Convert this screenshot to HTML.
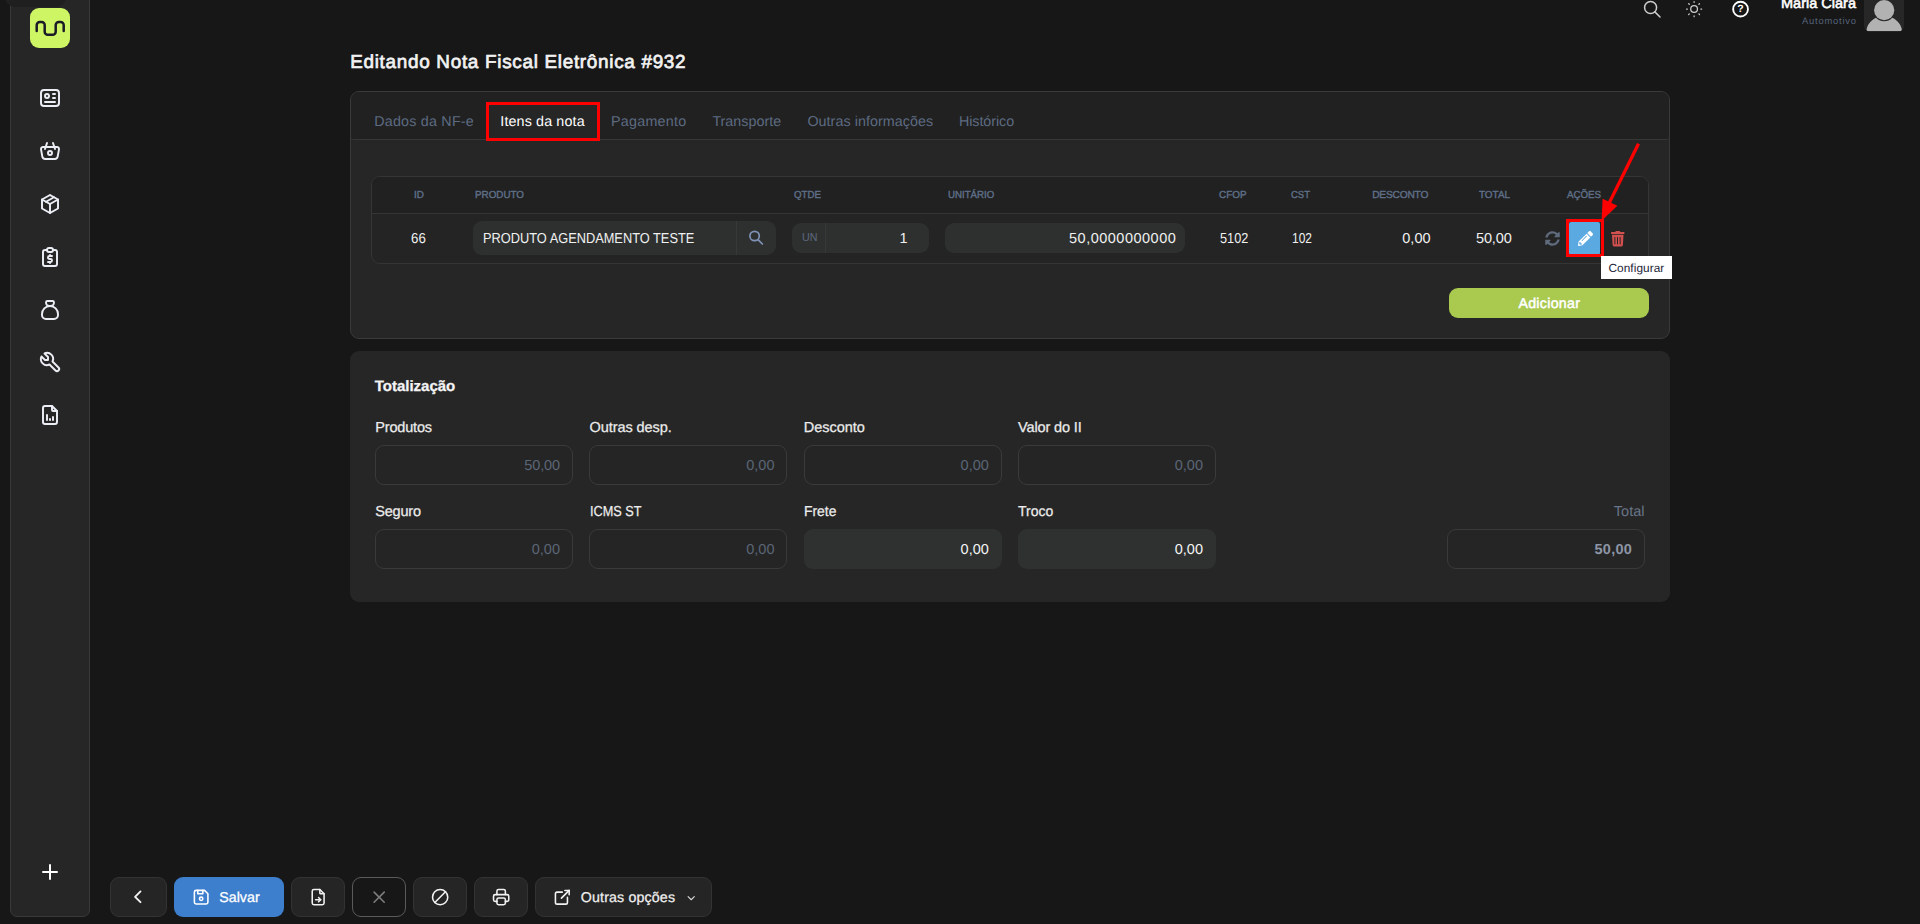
<!DOCTYPE html>
<html lang="pt-BR"><head><meta charset="utf-8"><title>Editando Nota Fiscal Eletrônica #932</title>
<style>
*{margin:0;padding:0;box-sizing:border-box}
html,body{width:1920px;height:924px;overflow:hidden;background:#171717;font-family:"Liberation Sans",sans-serif}
body{position:relative}
.a{position:absolute}
.t{position:absolute;white-space:pre;font-family:"Liberation Sans",sans-serif;text-rendering:geometricPrecision}
svg{position:absolute;overflow:visible}
.strip{left:0;top:0;width:10px;height:924px;background:#171717}
.side{left:10px;top:-10px;width:80px;height:927px;background:#262626;border:1px solid #393939;border-radius:0 0 7px 7px}
.notch{left:5px;top:-20px;width:61px;height:27px;background:#1f1f1f;border-radius:10px}
.logo{left:30px;top:8px;width:40px;height:40px;background:#cdf564;border-radius:9px}
.card{background:#262626;border:1px solid #3a3a3a;border-radius:9px}
.c1{left:350px;top:91px;width:1320px;height:248px}
.tabs{left:351px;top:92px;width:1318px;height:48px;background:#212121;border-bottom:1px solid #373737;border-radius:8px 8px 3px 3px}
.tabact{left:488px;top:105px;width:109px;height:35px;background:#262626}
.redbox{left:485.5px;top:102.3px;width:114px;height:39px;border:3.3px solid #fe0000}
.tbl{left:371px;top:176px;width:1278px;height:88px;background:#242424;border:1px solid #353535;border-radius:9px;overflow:hidden}
.tblh{left:0;top:0;width:1278px;height:37px;background:#212121;border-bottom:1px solid #353535}
.inp{background:#2e3030;border-radius:9px}
.i-prod{left:473px;top:221px;width:303px;height:34px}
.i-qty{left:792px;top:223px;width:137px;height:30px}
.i-unit{left:945px;top:223px;width:240px;height:30px}
.div{width:1px;background:#373939}
.blue{left:1568.8px;top:222.4px;width:31.7px;height:32.2px;background:#5ba9e1;border-radius:2px}
.red2{left:1565.5px;top:219.2px;width:38.1px;height:38.2px;border:3.3px solid #fe0000}
.tip{left:1601px;top:256px;width:71.2px;height:22.8px;background:#ffffff}
.add{left:1449px;top:288px;width:200px;height:30px;background:#a9c94f;border-radius:9px}
.c2{left:350px;top:351px;width:1320px;height:251px;border:0;border-radius:9px;background:#262626}
.f{width:198px;height:40px;border-radius:9px;border:1px solid #3a3a3a;background:#252525}
.f.fill{border:0;background:#2f3131}
.btn{top:877px;height:40px;border-radius:9px;background:#252525;border:1px solid #333333}
.btn.pri{background:#3d7ecd;border:0}
.btn.out{background:#171717;border:1px solid #5a5a5a}
.av{left:1864px;top:-6px;width:40px;height:37.5px;background:#272727;border-radius:6px;overflow:hidden}

</style></head>
<body>
<div class="a strip"></div>
<div class="a side"></div>
<div class="a notch"></div>
<div class="a logo"></div>
<svg style="left:30px;top:8px" width="40" height="40" viewBox="30 8 40 40" fill="none" stroke="#1b1b27" stroke-width="2.5" stroke-linecap="round" stroke-linejoin="round">
 <path d="M36.7 31V25.1a3.1 3.1 0 0 1 3.1 -3.1h1.800a3.100 3.100 0 0 1 3.100 3.100V31.700a3.100 3.100 0 0 0 3.100 3.100h4.800a3.100 3.100 0 0 0 3.100 -3.100V25.100a3.100 3.100 0 0 1 3.100 -3.100h1.800a3.100 3.100 0 0 1 3.100 3.100V31"/>
</svg>
<svg style="left:38.00px;top:86.00px" width="24" height="24" viewBox="0 0 24 24" fill="none" stroke="#eceef5" stroke-width="1.95" stroke-linecap="round" stroke-linejoin="round" ><path d="M3 7a3 3 0 0 1 3 -3h12a3 3 0 0 1 3 3v10a3 3 0 0 1 -3 3h-12a3 3 0 0 1 -3 -3z"/><path d="M7 10a2 2 0 1 0 4 0a2 2 0 1 0 -4 0"/><path d="M15 8h2"/><path d="M15 12h2"/><path d="M7 16h10"/></svg>
<svg style="left:38.00px;top:139.00px" width="24" height="24" viewBox="0 0 24 24" fill="none" stroke="#eceef5" stroke-width="1.95" stroke-linecap="round" stroke-linejoin="round" ><path d="M10 14a2 2 0 1 0 4 0a2 2 0 0 0 -4 0"/><path d="M5.001 8h13.999a2 2 0 0 1 1.977 2.304l-1.255 7.152a3 3 0 0 1 -2.966 2.544h-9.512a3 3 0 0 1 -2.965 -2.544l-1.255 -7.152a2 2 0 0 1 1.977 -2.304z"/><path d="M17 10l-2 -6"/><path d="M7 10l2 -6"/></svg>
<svg style="left:38.00px;top:192.00px" width="24" height="24" viewBox="0 0 24 24" fill="none" stroke="#eceef5" stroke-width="1.95" stroke-linecap="round" stroke-linejoin="round" ><path d="M12 3l8 4.5v9l-8 4.5l-8 -4.5v-9l8 -4.5"/><path d="M12 12l8 -4.5"/><path d="M12 12v9"/><path d="M12 12l-8 -4.5"/><path d="M16 5.25l-8 4.5"/></svg>
<svg style="left:38.00px;top:245.00px" width="24" height="24" viewBox="0 0 24 24" fill="none" stroke="#eceef5" stroke-width="1.95" stroke-linecap="round" stroke-linejoin="round" ><path d="M9 5h-2a2 2 0 0 0 -2 2v12a2 2 0 0 0 2 2h10a2 2 0 0 0 2 -2v-12a2 2 0 0 0 -2 -2h-2"/><path d="M9 5a2 2 0 0 1 2 -2h2a2 2 0 0 1 2 2a2 2 0 0 1 -2 2h-2a2 2 0 0 1 -2 -2z"/><path d="M14 11h-2.5a1.5 1.5 0 0 0 0 3h1a1.5 1.5 0 0 1 0 3h-2.5"/><path d="M12 17v1m0 -8v1"/></svg>
<svg style="left:38.00px;top:298.00px" width="24" height="24" viewBox="0 0 24 24" fill="none" stroke="#eceef5" stroke-width="1.95" stroke-linecap="round" stroke-linejoin="round" ><path d="M9.5 3h5a1.5 1.5 0 0 1 1.5 1.5a3.5 3.5 0 0 1 -3.5 3.5h-1a3.5 3.5 0 0 1 -3.5 -3.5a1.5 1.5 0 0 1 1.5 -1.500z"/><path d="M4 17v-1a8 8 0 1 1 16 0v1a4 4 0 0 1 -4 4h-8a4 4 0 0 1 -4 -4z"/></svg>
<svg style="left:38.00px;top:350.00px" width="24" height="24" viewBox="0 0 24 24" fill="none" stroke="#eceef5" stroke-width="1.95" stroke-linecap="round" stroke-linejoin="round" ><path d="M7 10h3v-3l-3.5 -3.5a6 6 0 0 1 8 8l6 6a2 2 0 0 1 -3 3l-6 -6a6 6 0 0 1 -8 -8l3.5 3.5"/></svg>
<svg style="left:38.00px;top:403.00px" width="24" height="24" viewBox="0 0 24 24" fill="none" stroke="#eceef5" stroke-width="1.95" stroke-linecap="round" stroke-linejoin="round" ><path d="M14 3v4a1 1 0 0 0 1 1h4"/><path d="M17 21h-10a2 2 0 0 1 -2 -2v-14a2 2 0 0 1 2 -2h7l5 5v11a2 2 0 0 1 -2 2z"/><path d="M9 17v-5"/><path d="M12 17v-1"/><path d="M15 17v-3"/></svg>
<svg style="left:38.00px;top:860.00px" width="24" height="24" viewBox="0 0 24 24" fill="none" stroke="#ffffff" stroke-width="2.0" stroke-linecap="round" stroke-linejoin="round" ><path d="M12 5v14"/><path d="M5 12h14"/></svg>
<svg style="left:1642.00px;top:-1.45px" width="20.6" height="20.6" viewBox="0 0 24 24" fill="none" stroke="#cdcdcd" stroke-width="1.75" stroke-linecap="round" stroke-linejoin="round" ><path d="M3 10a7 7 0 1 0 14 0a7 7 0 1 0 -14 0"/><path d="M21 21l-6 -6"/></svg>
<svg style="left:1683.90px;top:-1.00px" width="20.2" height="20.2" viewBox="0 0 24 24" fill="none" stroke="#cdcdcd" stroke-width="1.5" stroke-linecap="round" stroke-linejoin="round" ><path d="M8 12a4 4 0 1 0 8 0a4 4 0 1 0 -8 0"/><path d="M3 12h1m8 -9v1m8 8h1m-9 8v1m-6.400 -15.400l.7 .7m12.100 -.7l-.7 .7m0 11.400l.7 .7m-12.100 -.7l-.7 .7"/></svg>
<svg style="left:1730px;top:0" width="22" height="20" viewBox="1730 0 22 20" fill="none" stroke="#fff" stroke-width="1.900"><circle cx="1740.550" cy="9.150" r="7.400"/></svg>
<span class="t" style="left:1737.35px;top:4.2px;font-size:10.5px;line-height:10.5px;font-weight:700;color:#fff;">?</span>
<div class="a av"><svg style="left:0;top:0" width="40" height="38" viewBox="1864 -6 40 38">
 <path d="M1866.700 28.700c1.500-5.400 5.600-9.300 9.800-11.100c2.200 1.700 4.900 2.600 7.700 2.600s5.500-.9 7.700-2.600c4.200 1.800 8.300 5.700 9.800 11.100c.4 1.400-.5 2.300-1.900 2.300h-31.200c-1.400 0-2.300-.9-1.900-2.300z" fill="#b2b2b2"/>
 <circle cx="1884.200" cy="10.200" r="11.100" fill="#272727"/>
 <circle cx="1884.200" cy="10.200" r="10.100" fill="#b2b2b2"/>
</svg></div>
<div class="a card c1"></div>
<div class="a tabs"></div>
<div class="a tabact"></div>
<div class="a redbox"></div>
<div class="a tbl"><div class="a tblh"></div></div>
<div class="a inp i-prod"></div><div class="a div" style="left:736px;top:221px;height:34px"></div>
<div class="a inp i-qty"></div><div class="a div" style="left:825px;top:223px;height:30px"></div>
<div class="a inp i-unit"></div>
<svg style="left:746px;top:228px" width="20" height="20" viewBox="746 228 20 20" fill="none" stroke="#7f93b6" stroke-width="1.7" stroke-linecap="round">
 <circle cx="754.6" cy="236" r="4.700"/><path d="M758.200 239.800l4.200 4.200"/></svg>
<svg style="left:1545px;top:231px" width="15" height="15" viewBox="0 0 512 512" fill="#5f6b7d">
 <path d="M370.720 133.280C339.458 104.008 298.888 87.962 255.848 88c-77.458.068-144.328 53.178-162.791 126.850-1.344 5.363-6.122 9.150-11.651 9.150H24.103c-7.498 0-13.194-6.807-11.807-14.176C33.933 94.924 134.813 8 256 8c66.448 0 126.791 26.136 171.315 68.685L463.030 40.970C478.149 25.851 504 36.559 504 57.941V192c0 13.255-10.745 24-24 24H345.941c-21.382 0-32.090-25.851-16.971-40.971l41.750-41.749zM32 296h134.059c21.382 0 32.090 25.851 16.971 40.971l-41.750 41.750c31.262 29.273 71.835 45.319 114.876 45.280 77.418-.070 144.315-53.144 162.787-126.849 1.344-5.363 6.122-9.150 11.651-9.150h57.304c7.498 0 13.194 6.807 11.807 14.176C478.067 417.076 377.187 504 256 504c-66.448 0-126.791-26.136-171.315-68.685L48.970 471.030C33.851 486.149 8 475.441 8 454.059V320c0-13.255 10.745-24 24-24z"/></svg>
<div class="a blue"></div>
<div class="a red2"></div>
<svg style="left:1578px;top:231px" width="15" height="15" viewBox="0 0 512 512" fill="#ffffff" fill-rule="evenodd">
 <path d="M497.900 142.100l-46.100 46.100c-4.700 4.700-12.300 4.700-17 0l-111-111c-4.700-4.700-4.700-12.300 0-17l46.100-46.100c18.700-18.700 49.100-18.700 67.900 0l60.100 60.100c18.800 18.700 18.800 49.100 0 67.900zM284.200 99.800L21.600 362.400.4 483.900c-2.900 16.400 11.400 30.600 27.800 27.800l121.500-21.300 262.600-262.600c4.700-4.700 4.700-12.300 0-17l-111-111c-4.800-4.700-12.400-4.700-17.100 0zM124.100 339.900c-5.500-5.500-5.500-14.300 0-19.800l154-154c5.500-5.500 14.300-5.500 19.800 0s5.500 14.300 0 19.800l-154 154c-5.500 5.500-14.300 5.500-19.800 0zM88 424h48v36.300l-64.500 11.300-31.100-31.100L51.700 376H88v48z"/></svg>
<svg style="left:1611px;top:231px" width="13.5" height="15.400" viewBox="0 0 448 512" fill="#d2504e" fill-rule="evenodd">
 <path d="M432 32H312l-9.400-18.700A24 24 0 0 0 281.100 0H166.800a23.720 23.720 0 0 0-21.400 13.300L136 32H16A16 16 0 0 0 0 48v32a16 16 0 0 0 16 16h416a16 16 0 0 0 16-16V48a16 16 0 0 0-16-16zM53.200 467a48 48 0 0 0 47.900 45h245.800a48 48 0 0 0 47.900-45L416 128H32zM288 208a16 16 0 0 1 32 0v224a16 16 0 0 1-32 0zm-88 0a16 16 0 0 1 32 0v224a16 16 0 0 1-32 0zm-88 0a16 16 0 0 1 32 0v224a16 16 0 0 1-32 0z"/></svg>
<div class="a tip"></div>
<svg style="left:1590px;top:135px" width="60" height="95" viewBox="1590 135 60 95">
 <path d="M1638.500 143.700L1609.200 203" stroke="#ff0000" stroke-width="3.300" fill="none"/>
 <path d="M1601.600 220.800L1602.600 198.700L1617.400 205.700z" fill="#ff0000"/></svg>
<div class="a add"></div>
<div class="a c2"></div>
<div class="a f" style="left:375px;top:445px"></div>
<div class="a f" style="left:589.3px;top:445px"></div>
<div class="a f" style="left:803.6px;top:445px"></div>
<div class="a f" style="left:1018px;top:445px"></div>
<div class="a f" style="left:375px;top:529px"></div>
<div class="a f" style="left:589.3px;top:529px"></div>
<div class="a f fill" style="left:803.6px;top:529px"></div>
<div class="a f fill" style="left:1018px;top:529px"></div>
<div class="a f" style="left:1447px;top:529px"></div>
<div class="a btn" style="left:110px;width:57px"></div>
<div class="a btn pri" style="left:174px;width:110px"></div>
<div class="a btn" style="left:291px;width:54px"></div>
<div class="a btn out" style="left:352px;width:54px"></div>
<div class="a btn" style="left:413px;width:54px"></div>
<div class="a btn" style="left:474px;width:54px"></div>
<div class="a btn" style="left:535px;width:177px"></div>
<svg style="left:126.80px;top:886.00px" width="21.6" height="21.6" viewBox="0 0 24 24" fill="none" stroke="#f2f2f2" stroke-width="2.1" stroke-linecap="round" stroke-linejoin="round" ><path d="M15 6l-6 6l6 6"/></svg>
<svg style="left:190.75px;top:886.95px" width="20.3" height="20.3" viewBox="0 0 24 24" fill="none" stroke="#ffffff" stroke-width="1.85" stroke-linecap="round" stroke-linejoin="round" ><path d="M6 4h10l4 4v10a2 2 0 0 1 -2 2h-12a2 2 0 0 1 -2 -2v-12a2 2 0 0 1 2 -2"/><path d="M10 14a2 2 0 1 0 4 0a2 2 0 1 0 -4 0"/><path d="M14 4v4h-6v-4"/></svg>
<svg style="left:308.05px;top:886.95px" width="20.3" height="20.3" viewBox="0 0 24 24" fill="none" stroke="#f2f2f2" stroke-width="1.85" stroke-linecap="round" stroke-linejoin="round" ><path d="M14 3v4a1 1 0 0 0 1 1h4"/><path d="M17 21h-10a2 2 0 0 1 -2 -2v-14a2 2 0 0 1 2 -2h7l5 5v11a2 2 0 0 1 -2 2z"/><path d="M9 15h6"/><path d="M12.5 17.5l2.5 -2.5l-2.5 -2.5"/></svg>
<svg style="left:368.85px;top:886.95px" width="20.3" height="20.3" viewBox="0 0 24 24" fill="none" stroke="#7c7c7c" stroke-width="1.9" stroke-linecap="round" stroke-linejoin="round" ><path d="M18 6l-12 12"/><path d="M6 6l12 12"/></svg>
<svg style="left:429.85px;top:886.75px" width="20.3" height="20.3" viewBox="0 0 24 24" fill="none" stroke="#f2f2f2" stroke-width="1.85" stroke-linecap="round" stroke-linejoin="round" ><path d="M3 12a9 9 0 1 0 18 0a9 9 0 1 0 -18 0"/><path d="M5.7 18.3l12.6 -12.6"/></svg>
<svg style="left:490.95px;top:886.95px" width="20.3" height="20.3" viewBox="0 0 24 24" fill="none" stroke="#f2f2f2" stroke-width="1.85" stroke-linecap="round" stroke-linejoin="round" ><path d="M17 17h2a2 2 0 0 0 2 -2v-4a2 2 0 0 0 -2 -2h-14a2 2 0 0 0 -2 2v4a2 2 0 0 0 2 2h2"/><path d="M17 9v-4a2 2 0 0 0 -2 -2h-6a2 2 0 0 0 -2 2v4"/><path d="M7 15a2 2 0 0 1 2 -2h6a2 2 0 0 1 2 2v4a2 2 0 0 1 -2 2h-6a2 2 0 0 1 -2 -2z"/></svg>
<svg style="left:551.80px;top:886.90px" width="20.6" height="20.6" viewBox="0 0 24 24" fill="none" stroke="#f2f2f2" stroke-width="1.85" stroke-linecap="round" stroke-linejoin="round" ><path d="M12 6h-6a2 2 0 0 0 -2 2v10a2 2 0 0 0 2 2h10a2 2 0 0 0 2 -2v-6"/><path d="M11 13l9 -9"/><path d="M15 4h5v5"/></svg>
<svg style="left:685.20px;top:891.70px" width="12.4" height="12.4" viewBox="0 0 24 24" fill="none" stroke="#d8d8d8" stroke-width="2.2" stroke-linecap="round" stroke-linejoin="round" ><path d="M6 9l6 6l6 -6"/></svg>
<!-- text layer -->
<span class="t" id="t0" style="left:1781.00px;top:-3.47px;font-size:14.5px;line-height:14.5px;font-weight:400;color:#ffffff;letter-spacing:0.006px;-webkit-text-stroke:0.55px #ffffff;">Maria Clara</span>
<span class="t" id="t1" style="left:1802.00px;top:16.44px;font-size:9.4px;line-height:9.4px;font-weight:400;color:#56637a;letter-spacing:0.788px;">Automotivo</span>
<span class="t" id="t2" style="left:350.20px;top:53.80px;font-size:18.9px;line-height:18.9px;font-weight:400;color:#f2f2f2;letter-spacing:0.702px;-webkit-text-stroke:0.7px #f2f2f2;">Editando Nota Fiscal Eletrônica #932</span>
<span class="t" id="t3" style="left:374.20px;top:114.90px;font-size:14.3px;line-height:14.3px;font-weight:400;color:#5d6b82;letter-spacing:0.221px;">Dados da NF-e</span>
<span class="t" id="t4" style="left:500.30px;top:114.90px;font-size:14.3px;line-height:14.3px;font-weight:400;color:#ffffff;letter-spacing:0.136px;">Itens da nota</span>
<span class="t" id="t5" style="left:610.90px;top:114.90px;font-size:14.3px;line-height:14.3px;font-weight:400;color:#5d6b82;letter-spacing:0.284px;">Pagamento</span>
<span class="t" id="t6" style="left:712.40px;top:114.90px;font-size:14.3px;line-height:14.3px;font-weight:400;color:#5d6b82;letter-spacing:0.010px;">Transporte</span>
<span class="t" id="t7" style="left:807.40px;top:114.90px;font-size:14.3px;line-height:14.3px;font-weight:400;color:#5d6b82;letter-spacing:0.056px;">Outras informações</span>
<span class="t" id="t8" style="left:959.00px;top:114.90px;font-size:14.3px;line-height:14.3px;font-weight:400;color:#5d6b82;letter-spacing:-0.066px;">Histórico</span>
<span class="t" id="t9" style="left:413.60px;top:191.37px;font-size:10.2px;line-height:10.2px;font-weight:400;color:#5f6f88;transform:scaleX(0.9718);transform-origin:0 0;-webkit-text-stroke:0.4px #5f6f88;">ID</span>
<span class="t" id="t10" style="left:475.30px;top:191.37px;font-size:10.2px;line-height:10.2px;font-weight:400;color:#5f6f88;transform:scaleX(0.9652);transform-origin:0 0;-webkit-text-stroke:0.4px #5f6f88;">PRODUTO</span>
<span class="t" id="t11" style="left:794.30px;top:191.37px;font-size:10.2px;line-height:10.2px;font-weight:400;color:#5f6f88;transform:scaleX(0.9536);transform-origin:0 0;-webkit-text-stroke:0.4px #5f6f88;">QTDE</span>
<span class="t" id="t12" style="left:947.70px;top:191.37px;font-size:10.2px;line-height:10.2px;font-weight:400;color:#5f6f88;transform:scaleX(0.9510);transform-origin:0 0;-webkit-text-stroke:0.4px #5f6f88;">UNITÁRIO</span>
<span class="t" id="t13" style="left:1218.50px;top:191.37px;font-size:10.2px;line-height:10.2px;font-weight:400;color:#5f6f88;transform:scaleX(0.9713);transform-origin:0 0;-webkit-text-stroke:0.4px #5f6f88;">CFOP</span>
<span class="t" id="t14" style="left:1291.00px;top:191.37px;font-size:10.2px;line-height:10.2px;font-weight:400;color:#5f6f88;transform:scaleX(0.9325);transform-origin:0 0;-webkit-text-stroke:0.4px #5f6f88;">CST</span>
<span class="t" id="t15" style="left:1372.20px;top:191.37px;font-size:10.2px;line-height:10.2px;font-weight:400;color:#5f6f88;letter-spacing:-0.195px;-webkit-text-stroke:0.4px #5f6f88;">DESCONTO</span>
<span class="t" id="t16" style="left:1479.00px;top:191.37px;font-size:10.2px;line-height:10.2px;font-weight:400;color:#5f6f88;transform:scaleX(0.9721);transform-origin:0 0;-webkit-text-stroke:0.4px #5f6f88;">TOTAL</span>
<span class="t" id="t17" style="left:1567.20px;top:191.37px;font-size:10.2px;line-height:10.2px;font-weight:400;color:#5f6f88;transform:scaleX(0.9559);transform-origin:0 0;-webkit-text-stroke:0.4px #5f6f88;">AÇÕES</span>
<span class="t" id="t18" style="left:411.20px;top:231.93px;font-size:14.5px;line-height:14.5px;font-weight:400;color:#f0f0f0;transform:scaleX(0.9169);transform-origin:0 0;">66</span>
<span class="t" id="t19" style="left:482.50px;top:231.93px;font-size:14.5px;line-height:14.5px;font-weight:400;color:#f0f0f0;transform:scaleX(0.8830);transform-origin:0 0;">PRODUTO AGENDAMENTO TESTE</span>
<span class="t" id="t20" style="left:801.80px;top:232.18px;font-size:11.6px;line-height:11.6px;font-weight:400;color:#5c697d;transform:scaleX(0.9254);transform-origin:0 0;">UN</span>
<span class="t" id="t21" style="left:899.60px;top:231.93px;font-size:14.5px;line-height:14.5px;font-weight:400;color:#f0f0f0;">1</span>
<span class="t" id="t22" style="left:1069.00px;top:231.93px;font-size:14.5px;line-height:14.5px;font-weight:400;color:#f0f0f0;letter-spacing:0.499px;">50,0000000000</span>
<span class="t" id="t23" style="left:1220.00px;top:231.93px;font-size:14.5px;line-height:14.5px;font-weight:400;color:#f0f0f0;transform:scaleX(0.8771);transform-origin:0 0;">5102</span>
<span class="t" id="t24" style="left:1292.00px;top:231.93px;font-size:14.5px;line-height:14.5px;font-weight:400;color:#f0f0f0;transform:scaleX(0.8263);transform-origin:0 0;">102</span>
<span class="t" id="t25" style="left:1402.20px;top:231.93px;font-size:14.5px;line-height:14.5px;font-weight:400;color:#f0f0f0;letter-spacing:0.089px;">0,00</span>
<span class="t" id="t26" style="left:1475.90px;top:231.93px;font-size:14.5px;line-height:14.5px;font-weight:400;color:#f0f0f0;letter-spacing:-0.074px;">50,00</span>
<span class="t" id="t27" style="left:1608.40px;top:263.31px;font-size:11.8px;line-height:11.8px;font-weight:400;color:#1c2438;letter-spacing:0.090px;">Configurar</span>
<span class="t" id="t28" style="left:1518.40px;top:296.98px;font-size:14.2px;line-height:14.2px;font-weight:400;color:#ffffff;letter-spacing:0.305px;-webkit-text-stroke:0.5px #ffffff;">Adicionar</span>
<span class="t" id="t29" style="left:374.80px;top:379.30px;font-size:15px;line-height:15px;font-weight:700;color:#f4f4f4;letter-spacing:-0.018px;-webkit-text-stroke:0.3px #f4f4f4;">Totalização</span>
<span class="t" id="t30" style="left:375.30px;top:420.73px;font-size:14.5px;line-height:14.5px;font-weight:400;color:#ececec;letter-spacing:-0.178px;-webkit-text-stroke:0.25px #ececec;">Produtos</span>
<span class="t" id="t31" style="left:589.50px;top:420.73px;font-size:14.5px;line-height:14.5px;font-weight:400;color:#ececec;letter-spacing:-0.065px;-webkit-text-stroke:0.25px #ececec;">Outras desp.</span>
<span class="t" id="t32" style="left:803.80px;top:420.73px;font-size:14.5px;line-height:14.5px;font-weight:400;color:#ececec;letter-spacing:-0.038px;-webkit-text-stroke:0.25px #ececec;">Desconto</span>
<span class="t" id="t33" style="left:1018.00px;top:420.73px;font-size:14.5px;line-height:14.5px;font-weight:400;color:#ececec;letter-spacing:-0.123px;-webkit-text-stroke:0.25px #ececec;">Valor do II</span>
<span class="t" id="t34" style="left:375.30px;top:504.73px;font-size:14.5px;line-height:14.5px;font-weight:400;color:#ececec;letter-spacing:-0.213px;-webkit-text-stroke:0.25px #ececec;">Seguro</span>
<span class="t" id="t35" style="left:589.50px;top:504.73px;font-size:14.5px;line-height:14.5px;font-weight:400;color:#ececec;transform:scaleX(0.8757);transform-origin:0 0;-webkit-text-stroke:0.25px #ececec;">ICMS ST</span>
<span class="t" id="t36" style="left:803.80px;top:504.73px;font-size:14.5px;line-height:14.5px;font-weight:400;color:#ececec;transform:scaleX(0.9573);transform-origin:0 0;-webkit-text-stroke:0.25px #ececec;">Frete</span>
<span class="t" id="t37" style="left:1018.00px;top:504.73px;font-size:14.5px;line-height:14.5px;font-weight:400;color:#ececec;transform:scaleX(0.9636);transform-origin:0 0;-webkit-text-stroke:0.25px #ececec;">Troco</span>
<span class="t" id="t38" style="left:1613.80px;top:504.73px;font-size:14.5px;line-height:14.5px;font-weight:400;color:#687588;letter-spacing:0.040px;">Total</span>
<span class="t" id="t39" style="left:524.30px;top:458.73px;font-size:14.5px;line-height:14.5px;font-weight:400;color:#5b6676;letter-spacing:-0.149px;">50,00</span>
<span class="t" id="t40" style="left:746.30px;top:458.73px;font-size:14.5px;line-height:14.5px;font-weight:400;color:#5b6676;letter-spacing:-0.011px;">0,00</span>
<span class="t" id="t41" style="left:960.60px;top:458.73px;font-size:14.5px;line-height:14.5px;font-weight:400;color:#5b6676;letter-spacing:-0.011px;">0,00</span>
<span class="t" id="t42" style="left:1174.80px;top:458.73px;font-size:14.5px;line-height:14.5px;font-weight:400;color:#5b6676;letter-spacing:-0.011px;">0,00</span>
<span class="t" id="t43" style="left:531.80px;top:542.73px;font-size:14.5px;line-height:14.5px;font-weight:400;color:#5b6676;letter-spacing:-0.011px;">0,00</span>
<span class="t" id="t44" style="left:746.30px;top:542.73px;font-size:14.5px;line-height:14.5px;font-weight:400;color:#5b6676;letter-spacing:-0.011px;">0,00</span>
<span class="t" id="t45" style="left:960.60px;top:542.73px;font-size:14.5px;line-height:14.5px;font-weight:400;color:#f4f4f4;letter-spacing:-0.011px;">0,00</span>
<span class="t" id="t46" style="left:1174.80px;top:542.73px;font-size:14.5px;line-height:14.5px;font-weight:400;color:#f4f4f4;letter-spacing:-0.011px;">0,00</span>
<span class="t" id="t47" style="left:1594.50px;top:542.73px;font-size:14.5px;line-height:14.5px;font-weight:700;color:#8d95a6;letter-spacing:0.251px;">50,00</span>
<span class="t" id="t48" style="left:219.20px;top:890.98px;font-size:14.2px;line-height:14.2px;font-weight:400;color:#ffffff;letter-spacing:0.056px;-webkit-text-stroke:0.3px #ffffff;">Salvar</span>
<span class="t" id="t49" style="left:580.80px;top:890.98px;font-size:14.2px;line-height:14.2px;font-weight:400;color:#f0f0f0;letter-spacing:0.160px;-webkit-text-stroke:0.25px #f0f0f0;">Outras opções</span>
</body></html>
